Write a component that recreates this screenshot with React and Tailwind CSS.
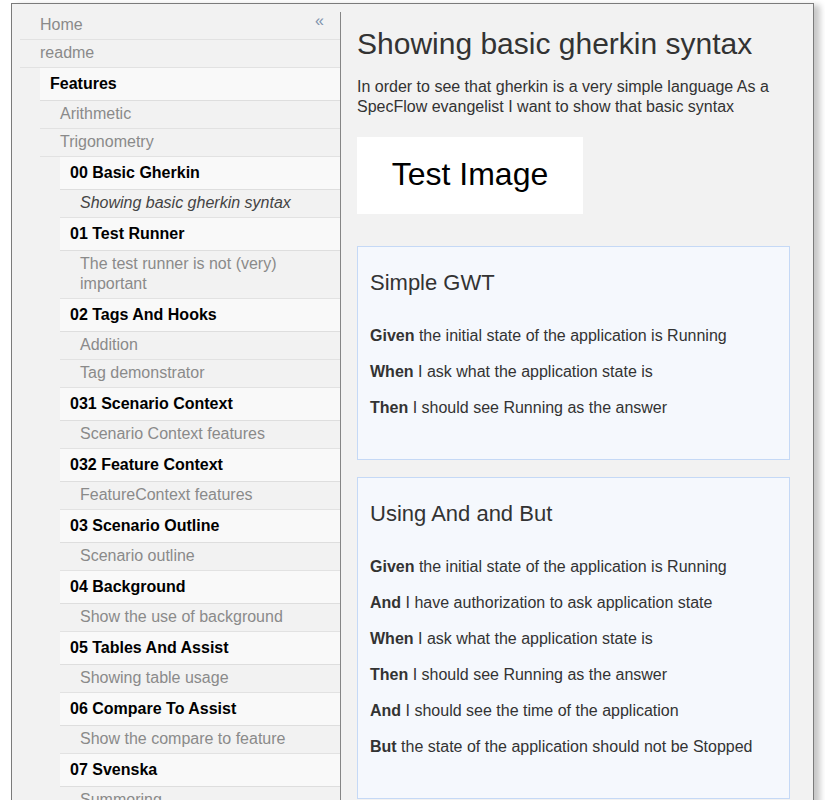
import React from "react";

const font = { fontFamily: '"Liberation Sans", Arial, sans-serif' };

function Item({ children, className = "" }) {
  return (
    <div className={`border-b border-[#e2e2e2] pl-5 pr-2 pt-[3px] pb-[4px] leading-5 text-[#8a8a8a] ${className}`}>
      {children}
    </div>
  );
}

function Header({ children }) {
  return (
    <div className="border-b border-[#dedede] bg-[#f9f9f9] pl-[10px] pt-[6px] pb-[6px] font-bold leading-5 text-black">
      {children}
    </div>
  );
}

const features = [
  ["00 Basic Gherkin", ["Showing basic gherkin syntax"], true],
  ["01 Test Runner", ["The test runner is not (very) important"]],
  ["02 Tags And Hooks", ["Addition", "Tag demonstrator"]],
  ["031 Scenario Context", ["Scenario Context features"]],
  ["032 Feature Context", ["FeatureContext features"]],
  ["03 Scenario Outline", ["Scenario outline"]],
  ["04 Background", ["Show the use of background"]],
  ["05 Tables And Assist", ["Showing table usage"]],
  ["06 Compare To Assist", ["Show the compare to feature"]],
  ["07 Svenska", ["Summoring"]],
];

function Step({ k, t }) {
  return (
    <p className="leading-5">
      <b>{k}</b> {t}
    </p>
  );
}

function Scenario({ title, steps, className = "" }) {
  return (
    <div className={`border border-[#c5d9f6] bg-[#f5f8fd] px-3 pt-[23px] pb-[41px] ${className}`}>
      <h2 className="mb-[30px] text-[22px] leading-[26px] text-[#333]">{title}</h2>
      <div className="flex flex-col gap-4">
        {steps.map(([k, t], i) => (
          <Step key={i} k={k} t={t} />
        ))}
      </div>
    </div>
  );
}

export default function App() {
  return (
    <div className="h-screen overflow-hidden bg-white pt-[3px] pl-[11px]" style={font}>
      <div className="flex h-[900px] w-[803px] border border-[#7b7b7b] bg-[#f2f2f2] text-base shadow-[6px_2px_6px_rgba(0,0,0,0.22)]">
        {/* Sidebar */}
        <div className="ml-2 mt-2 w-[321px] shrink-0 border-r border-[#858585]">
          <div className="relative">
            <Item>Home</Item>
            <span className="absolute right-[16px] top-[-1px] text-[16px] leading-5 text-[#7f93ad]">«</span>
          </div>
          <Item>readme</Item>
          <div className="ml-5">
            <Header>Features</Header>
            <Item>Arithmetic</Item>
            <Item>Trigonometry</Item>
            <div className="ml-5">
              {features.map(([h, items, active]) => (
                <React.Fragment key={h}>
                  <Header>{h}</Header>
                  {items.map((it) => (
                    <Item key={it} className={active ? "italic !text-[#444]" : ""}>
                      {it}
                    </Item>
                  ))}
                </React.Fragment>
              ))}
            </div>
          </div>
        </div>

        {/* Main */}
        <div className="flex-1 pl-4 pr-[23px] pt-[22px] text-[#333]">
          <h1 className="mb-[15px] text-[30px] leading-9 text-[#333]">Showing basic gherkin syntax</h1>
          <p className="leading-5">
            In order to see that gherkin is a very simple language As a SpecFlow evangelist I want to show that basic syntax
          </p>
          <div className="mt-[20px] flex h-[77px] w-[226px] items-center justify-center bg-white pb-[4px] text-[32px] leading-9 text-black">
            Test Image
          </div>
          <Scenario
            className="mt-8"
            title="Simple GWT"
            steps={[
              ["Given", "the initial state of the application is Running"],
              ["When", "I ask what the application state is"],
              ["Then", "I should see Running as the answer"],
            ]}
          />
          <Scenario
            className="mt-[17px]"
            title="Using And and But"
            steps={[
              ["Given", "the initial state of the application is Running"],
              ["And", "I have authorization to ask application state"],
              ["When", "I ask what the application state is"],
              ["Then", "I should see Running as the answer"],
              ["And", "I should see the time of the application"],
              ["But", "the state of the application should not be Stopped"],
            ]}
          />
        </div>
      </div>
    </div>
  );
}
